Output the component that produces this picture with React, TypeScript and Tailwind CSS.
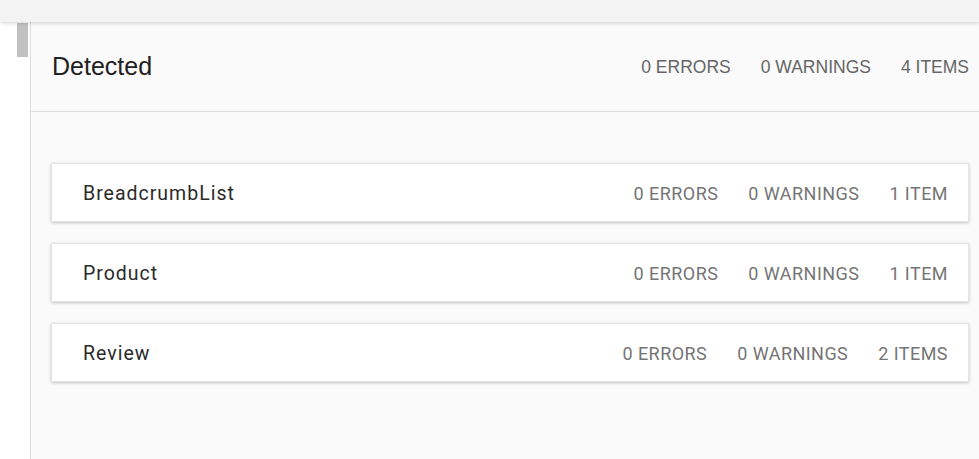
import React from "react";

const cards = [
  { name: "BreadcrumbList", items: "1 ITEM" },
  { name: "Product", items: "1 ITEM" },
  { name: "Review", items: "2 ITEMS" },
];

export default function App() {
  return (
    <div className="flex h-[459px] w-[979px] flex-col overflow-hidden bg-[#fafafa]">
      <div className="relative z-10 h-[22px] shrink-0 bg-[#f3f3f3] shadow-[0_1px_4px_rgba(0,0,0,0.18)]" />
      <div className="flex flex-1">
        <div className="w-[31px] shrink-0 border-r border-[#dcdcdc] bg-white">
          <div className="ml-[17px] mt-[1px] h-[34px] w-[11px] bg-[#c1c1c1]" />
        </div>
        <div className="flex flex-1 flex-col">
          <div className="flex h-[90px] items-center justify-between border-b border-[#dedede] pl-[21px] pr-[10px] pt-[1px]">
            <div className="font-['Liberation_Sans',Arial,sans-serif] text-[25px] text-[#212121]">Detected</div>
            <div className="flex gap-[30px] font-['Liberation_Sans',Arial,sans-serif] text-[17.5px] text-[#666666]">
              <span>0 ERRORS</span>
              <span>0 WARNINGS</span>
              <span>4 ITEMS</span>
            </div>
          </div>
          <div className="mt-[51px] flex flex-col gap-[21px] pl-[20px] pr-[10px]">
            {cards.map((c) => (
              <div
                key={c.name}
                className="flex h-[59px] items-center justify-between border border-[#e4e4e4] bg-white pl-[31px] pr-[20px] pt-[2px] shadow-[0_1px_3px_rgba(0,0,0,0.22)] font-['Roboto',sans-serif]"
              >
                <span className="text-[19.5px] tracking-[1px] text-[#2a2a2a]">{c.name}</span>
                <div className="flex gap-[30px] text-[18px] tracking-[0.45px] text-[#757575]">
                  <span>0 ERRORS</span>
                  <span>0 WARNINGS</span>
                  <span>{c.items}</span>
                </div>
              </div>
            ))}
          </div>
        </div>
      </div>
    </div>
  );
}
